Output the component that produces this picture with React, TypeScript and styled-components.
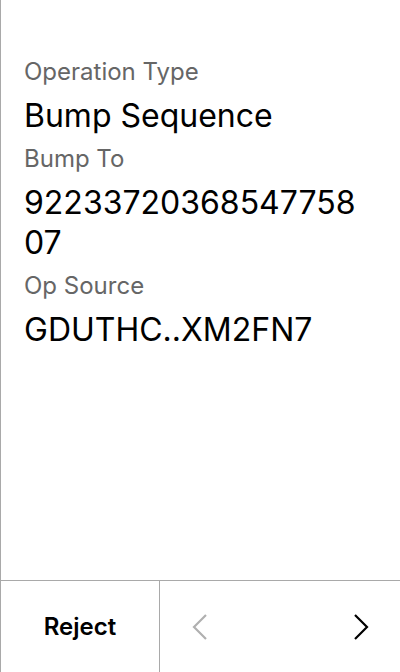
import React from "react";
import styled, { createGlobalStyle } from "styled-components";

const Global = createGlobalStyle`
  html, body { margin: 0; padding: 0; background: #fff; }
  * { box-sizing: border-box; }
`;

const Screen = styled.div`
  width: 400px;
  height: 672px;
  display: flex;
  flex-direction: column;
  border-left: 1px solid #a9a9a9;
  font-family: Inter, "Noto Sans", sans-serif;
  color: #000;
`;

const Content = styled.div`
  flex: 1;
  padding: 56px 32px 0 23px;
  display: flex;
  flex-direction: column;
`;

const Label = styled.div`
  font-size: 24px;
  line-height: 32px;
  color: #666;
  margin-bottom: 8px;
`;

const Value = styled.div`
  font-size: 32px;
  line-height: 40px;
  color: #000;
  word-break: break-all;
  margin-bottom: 7px;
`;

const Footer = styled.div`
  height: 92px;
  border-top: 1px solid #a9a9a9;
  display: grid;
  grid-template-columns: 159px 1fr;
`;

const RejectButton = styled.div`
  display: flex;
  align-items: center;
  justify-content: center;
  font-size: 24px;
  font-weight: 600;
  border-right: 1px solid #a9a9a9;
`;

const Nav = styled.div`
  display: flex;
  align-items: center;
  justify-content: space-between;
  padding: 0 31px 0 32px;
`;

const Chevron = ({ dir, color }: { dir: "left" | "right"; color: string }) => (
  <svg width="16" height="26" viewBox="0 0 16 26" fill="none">
    <path
      d={dir === "left" ? "M14 1 L2 13 L14 25" : "M2 1 L14 13 L2 25"}
      stroke={color}
      strokeWidth="2.2"
    />
  </svg>
);

export default function App() {
  return (
    <>
      <Global />
      <Screen>
        <Content>
          <Label>Operation Type</Label>
          <Value>Bump Sequence</Value>
          <Label>Bump To</Label>
          <Value>9223372036854775807</Value>
          <Label>Op Source</Label>
          <Value>GDUTHC..XM2FN7</Value>
        </Content>
        <Footer>
          <RejectButton>Reject</RejectButton>
          <Nav>
            <Chevron dir="left" color="#b0b0b0" />
            <Chevron dir="right" color="#000" />
          </Nav>
        </Footer>
      </Screen>
    </>
  );
}
